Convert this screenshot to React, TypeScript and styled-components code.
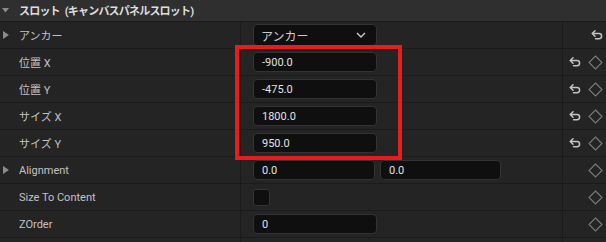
import React from 'react';
import styled, { createGlobalStyle } from 'styled-components';

const GlobalStyle = createGlobalStyle`
  html, body {
    margin: 0;
    padding: 0;
    background: #242424;
  }
  * {
    box-sizing: border-box;
  }
`;

const Panel = styled.div`
  position: relative;
  width: 606px;
  height: 242px;
  overflow: hidden;
  background: #242424;
  font-family: Roboto, 'Noto Sans CJK JP', sans-serif;
  color: #c0c0c0;
`;

const Header = styled.div`
  display: flex;
  align-items: center;
  height: 22px;
  padding-left: 2px;
  padding-bottom: 1px;
  background: #2f2f2f;
  border-bottom: 1px solid #1b1b1b;
  color: #dedede;
  font-size: 11px;
  font-weight: 700;
  letter-spacing: -0.8px;
  word-spacing: 3px;
  white-space: pre;
`;

const Row = styled.div`
  display: grid;
  grid-template-columns: 241px 321px 44px;
  height: 27px;
  border-bottom: 1px solid #1b1b1b;
`;

const NameCell = styled.div`
  display: flex;
  align-items: center;
  padding-left: 3px;
  border-right: 1px solid #1b1b1b;
  font-size: 11px;
  color: #c2c2c2;
`;

const Expander = styled.span<{ $wide?: boolean }>`
  display: inline-flex;
  width: ${(p) => (p.$wide ? 17 : 16)}px;
  height: 10px;
  align-items: center;
`;

const ValueCell = styled.div`
  display: flex;
  align-items: center;
  gap: 5px;
  padding-left: 12px;
`;

const ActionCell = styled.div`
  display: flex;
  align-items: center;
  justify-content: flex-end;
  gap: 7px;
  padding-right: 3px;
  border-left: 1px solid #1b1b1b;
`;

const NumberBox = styled.div<{ $width?: number }>`
  display: flex;
  align-items: center;
  width: ${(p) => p.$width ?? 124}px;
  height: 20px;
  padding-left: 8px;
  background: #0f0f0f;
  border: 1px solid #333333;
  border-radius: 4px;
  color: #e2e2e2;
  font-size: 11px;
`;

const Dropdown = styled.div`
  display: flex;
  align-items: center;
  justify-content: space-between;
  width: 124px;
  height: 22px;
  padding: 0 10px 0 7px;
  background: #0f0f0f;
  border: 1px solid #333333;
  border-radius: 4px;
  color: #cccccc;
  font-size: 12px;
`;

const Checkbox = styled.div`
  width: 17px;
  height: 17px;
  background: #0f0f0f;
  border: 1px solid #333333;
  border-radius: 3px;
`;

const Highlight = styled.div`
  position: absolute;
  left: 235px;
  top: 45px;
  width: 167px;
  height: 115px;
  border: 4px solid #e81c1c;
  pointer-events: none;
`;

const Arrow: React.FC<{ open?: boolean }> = ({ open }) =>
  open ? (
    <svg width="7" height="5" viewBox="0 0 7 5">
      <path d="M0 0 L7 0 L3.5 4.5 Z" fill="#8c8c8c" />
    </svg>
  ) : (
    <svg width="6" height="8" viewBox="0 0 6 8">
      <path d="M0 0 L6 4 L0 8 Z" fill="#8c8c8c" />
    </svg>
  );

const ResetIcon = () => (
  <svg width="12" height="10" viewBox="0 0 12 10" fill="none">
    <path
      d="M4 0.8 L1.2 3.5 L4 6.2 M1.2 3.5 H8 A2.6 2.6 0 0 1 8 8.7 H4.5"
      stroke="#c4c4c4"
      strokeWidth="1.5"
      strokeLinecap="round"
      strokeLinejoin="round"
    />
  </svg>
);

const KeyIcon = () => (
  <svg width="15" height="15" viewBox="0 0 15 15" fill="none">
    <path d="M7.5 1 L14 7.5 L7.5 14 L1 7.5 Z" stroke="#7a7a7a" strokeWidth="1.1" />
  </svg>
);

const Chevron = () => (
  <svg width="10" height="6" viewBox="0 0 10 6" fill="none">
    <path d="M1 1 L5 5 L9 1" stroke="#c8c8c8" strokeWidth="1.4" />
  </svg>
);

type Prop = {
  name: string;
  expandable?: boolean;
  value: React.ReactNode;
  reset?: boolean;
  keyframe?: boolean;
};

const props: Prop[] = [
  {
    name: 'アンカー',
    expandable: true,
    value: (
      <Dropdown>
        アンカー
        <Chevron />
      </Dropdown>
    ),
    reset: true,
  },
  { name: '位置 X', value: <NumberBox>-900.0</NumberBox>, reset: true, keyframe: true },
  { name: '位置 Y', value: <NumberBox>-475.0</NumberBox>, reset: true, keyframe: true },
  { name: 'サイズ X', value: <NumberBox>1800.0</NumberBox>, reset: true, keyframe: true },
  { name: 'サイズ Y', value: <NumberBox>950.0</NumberBox>, reset: true, keyframe: true },
  {
    name: 'Alignment',
    expandable: true,
    value: (
      <>
        <NumberBox $width={122}>0.0</NumberBox>
        <NumberBox $width={121}>0.0</NumberBox>
      </>
    ),
    keyframe: true,
  },
  { name: 'Size To Content', value: <Checkbox />, keyframe: true },
  { name: 'ZOrder', value: <NumberBox>0</NumberBox>, keyframe: true },
];

export default function App() {
  return (
    <>
      <GlobalStyle />
      <Panel>
        <Header>
          <Expander $wide>
            <Arrow open />
          </Expander>
          スロット (キャンバスパネルスロット)
        </Header>
        {props.map((p) => (
          <Row key={p.name}>
            <NameCell>
              <Expander>{p.expandable && <Arrow />}</Expander>
              {p.name}
            </NameCell>
            <ValueCell>{p.value}</ValueCell>
            <ActionCell>
              {p.reset && <ResetIcon />}
              {p.keyframe && <KeyIcon />}
            </ActionCell>
          </Row>
        ))}
        <Row>
          <NameCell />
          <ValueCell />
          <ActionCell />
        </Row>
        <Highlight />
      </Panel>
    </>
  );
}
